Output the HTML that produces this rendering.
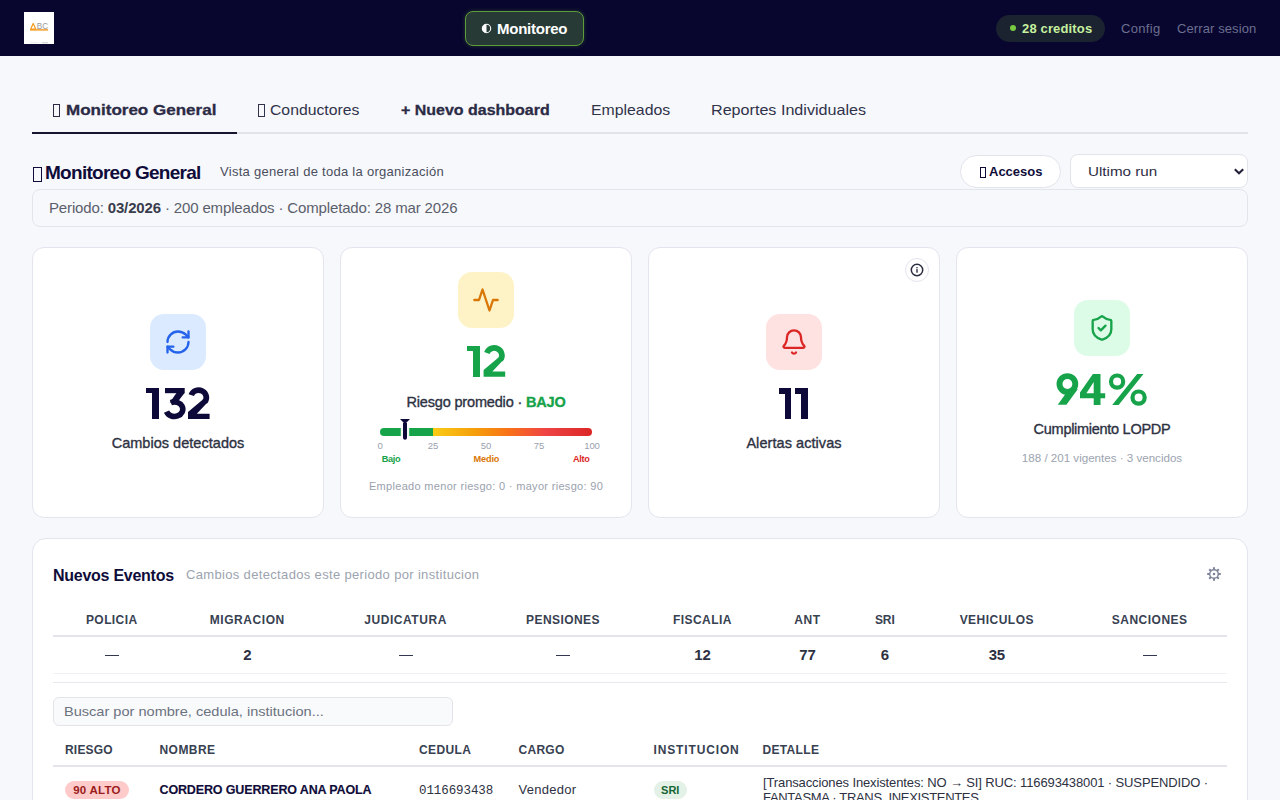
<!DOCTYPE html>
<html><head><meta charset="utf-8"><title>Monitoreo</title>
<style>
html,body{margin:0;padding:0;width:1280px;height:800px;overflow:hidden;background:#f7f8fc;font-family:"Liberation Sans",sans-serif}
.t{position:absolute;white-space:nowrap}
b{font-weight:700}
</style></head><body>
<div style="position:absolute;left:0px;top:0px;width:1280px;height:56px;box-sizing:border-box;background:#08062e"></div>
<div style="position:absolute;left:24px;top:12px;width:30px;height:32px;box-sizing:border-box;background:#fff"></div>
<svg style="position:absolute;left:24px;top:12px" width="30" height="32" viewBox="0 0 30 32"><path d="M6.6 17.2 L9.2 11.6 L11.8 17.2 Z" fill="none" stroke="#f39a1e" stroke-width="1.2" stroke-linejoin="round"/><text x="12.8" y="17.3" font-family="Liberation Sans" font-size="8.6" fill="#9a9a9a" textLength="11.3" lengthAdjust="spacingAndGlyphs">BC</text><rect x="6" y="17.2" width="18.1" height="1.4" fill="#f39a1e"/><rect x="6" y="30.3" width="8" height="0.9" fill="#e6e6e6"/><rect x="15" y="30.2" width="2" height="1" fill="#eee"/><rect x="18" y="30.1" width="6" height="1.2" fill="#d4d4d4"/></svg>
<div style="position:absolute;left:465px;top:11px;width:119px;height:35px;box-sizing:border-box;background:#283a35;border:1.5px solid #5e9b3a;border-radius:8px;box-shadow:0 0 4px rgba(94,155,58,0.35)"></div>
<svg style="position:absolute;left:481px;top:23px" width="11" height="11" viewBox="0 0 11 11"><circle cx="5.5" cy="5.5" r="4.2" fill="none" stroke="#fff" stroke-width="1.1"/><path d="M5.5 1.3 A4.2 4.2 0 0 0 5.5 9.7 Z" fill="#fff"/></svg>
<div class="t" style="left:497px;top:21.00px;font-size:15px;line-height:15.0px;font-weight:700;color:#ffffff;letter-spacing:-0.25px;font-family:'Liberation Sans', sans-serif;">Monitoreo</div>
<div style="position:absolute;left:996px;top:15px;width:109px;height:27px;box-sizing:border-box;background:#1b2230;border-radius:14px"></div>
<div style="position:absolute;left:1010px;top:25px;width:6px;height:6px;box-sizing:border-box;background:#7ac943;border-radius:50%"></div>
<div class="t" style="left:1022px;top:21.80px;font-size:13px;line-height:13.0px;font-weight:700;color:#c6f19f;letter-spacing:0.15px;font-family:'Liberation Sans', sans-serif;">28 creditos</div>
<div class="t" style="left:1121px;top:21.75px;font-size:13px;line-height:13.0px;font-weight:400;color:#6c6f90;letter-spacing:0.34px;font-family:'Liberation Sans', sans-serif;">Config</div>
<div class="t" style="left:1177px;top:21.75px;font-size:13px;line-height:13.0px;font-weight:400;color:#6c6f90;letter-spacing:0.1px;font-family:'Liberation Sans', sans-serif;">Cerrar sesion</div>
<div style="position:absolute;left:0px;top:56px;width:1280px;height:744px;box-sizing:border-box;background:#f7f8fc"></div>
<div style="position:absolute;left:32px;top:132px;width:1216px;height:2px;box-sizing:border-box;background:#e1e3ea"></div>
<div style="position:absolute;left:32px;top:132px;width:205px;height:2px;box-sizing:border-box;background:#151530"></div>
<div style="position:absolute;left:53px;top:104px;width:7px;height:12.5px;box-sizing:border-box;border:1.2px solid #2b2b45"></div>
<div class="t" style="left:65.5px;top:101.90px;font-size:15px;line-height:15.0px;font-weight:700;color:#2b2b45;letter-spacing:0px;font-family:'Liberation Sans', sans-serif;-webkit-text-stroke:0.3px #2b2b45;transform:scaleX(1.135);transform-origin:0 0;">Monitoreo General</div>
<div style="position:absolute;left:257.5px;top:104px;width:7px;height:12.5px;box-sizing:border-box;border:1px solid #30334a"></div>
<div class="t" style="left:270px;top:101.90px;font-size:15px;line-height:15.0px;font-weight:400;color:#30334a;letter-spacing:0px;font-family:'Liberation Sans', sans-serif;transform:scaleX(1.05);transform-origin:0 0;">Conductores</div>
<div class="t" style="left:401px;top:101.90px;font-size:15px;line-height:15.0px;font-weight:700;color:#2b2b45;letter-spacing:0px;font-family:'Liberation Sans', sans-serif;-webkit-text-stroke:0.3px #2b2b45;transform:scaleX(1.065);transform-origin:0 0;">+ Nuevo dashboard</div>
<div class="t" style="left:591px;top:101.90px;font-size:15px;line-height:15.0px;font-weight:400;color:#30334a;letter-spacing:0px;font-family:'Liberation Sans', sans-serif;transform:scaleX(1.055);transform-origin:0 0;">Empleados</div>
<div class="t" style="left:710.5px;top:101.90px;font-size:15px;line-height:15.0px;font-weight:400;color:#30334a;letter-spacing:0px;font-family:'Liberation Sans', sans-serif;transform:scaleX(1.075);transform-origin:0 0;">Reportes Individuales</div>
<div style="position:absolute;left:32.7px;top:167px;width:9.7px;height:14.5px;box-sizing:border-box;border:1.5px solid #0f0c3a"></div>
<div class="t" style="left:45px;top:163.12px;font-size:19px;line-height:19.0px;font-weight:700;color:#0f0c3a;letter-spacing:-0.719px;font-family:'Liberation Sans', sans-serif;">Monitoreo General</div>
<div class="t" style="left:220px;top:165.00px;font-size:13px;line-height:13.0px;font-weight:400;color:#4a4e5d;letter-spacing:0.278px;font-family:'Liberation Sans', sans-serif;">Vista general de toda la organización</div>
<div style="position:absolute;left:960px;top:155px;width:101px;height:33px;box-sizing:border-box;background:#fff;border:1px solid #e2e4ec;border-radius:17px"></div>
<div style="position:absolute;left:979.5px;top:166.5px;width:6.5px;height:11.5px;box-sizing:border-box;border:1.2px solid #0f0c3a"></div>
<div class="t" style="left:989px;top:164.80px;font-size:13px;line-height:13.0px;font-weight:700;color:#0f0c3a;letter-spacing:0.0px;font-family:'Liberation Sans', sans-serif;">Accesos</div>
<div style="position:absolute;left:1070px;top:154px;width:178px;height:34px;box-sizing:border-box;background:#fff;border:1px solid #e2e4ec;border-radius:8px"></div>
<div class="t" style="left:1088px;top:164.87px;font-size:13.5px;line-height:13.5px;font-weight:400;color:#2d2d45;letter-spacing:0px;font-family:'Liberation Sans', sans-serif;transform:scaleX(1.125);transform-origin:0 0;">Ultimo run</div>
<svg style="position:absolute;left:1233px;top:167px" width="12" height="9" viewBox="0 0 12 9"><path d="M1.8 2.2 L6 6.3 L10.2 2.2" fill="none" stroke="#22223a" stroke-width="2.1"/></svg>
<div style="position:absolute;left:32px;top:189px;width:1216px;height:38px;box-sizing:border-box;background:#f7f8fc;border:1px solid #e3e5ec;border-radius:8px"></div>
<div class="t" style="left:49px;top:199.50px;font-size:15px;line-height:15.0px;font-weight:400;color:#5b5f6b;letter-spacing:-0.148px;font-family:'Liberation Sans', sans-serif;">Periodo: <b style="color:#3a3d4c">03/2026</b> · 200 empleados · Completado: 28 mar 2026</div>
<div style="position:absolute;left:32px;top:247px;width:292px;height:271px;box-sizing:border-box;background:#fff;border:1px solid #e3e5ee;border-radius:12px"></div>
<div style="position:absolute;left:340px;top:247px;width:292px;height:271px;box-sizing:border-box;background:#fff;border:1px solid #e3e5ee;border-radius:12px"></div>
<div style="position:absolute;left:648px;top:247px;width:292px;height:271px;box-sizing:border-box;background:#fff;border:1px solid #e3e5ee;border-radius:12px"></div>
<div style="position:absolute;left:956px;top:247px;width:292px;height:271px;box-sizing:border-box;background:#fff;border:1px solid #e3e5ee;border-radius:12px"></div>
<div style="position:absolute;left:150px;top:314px;width:56px;height:56px;box-sizing:border-box;background:#dbeafe;border-radius:14px"></div>
<svg style="position:absolute;left:164px;top:328px" width="28" height="28" viewBox="0 0 24 24" fill="none" stroke-width="2" stroke-linecap="round" stroke-linejoin="round"><g stroke="#2563eb"><path d="M3 12a9 9 0 0 1 9-9 9.75 9.75 0 0 1 6.74 2.74L21 8"/><path d="M21 3v5h-5"/><path d="M21 12a9 9 0 0 1-9 9 9.75 9.75 0 0 1-6.74-2.74L3 16"/><path d="M8 16H3v5"/></g></svg>
<div style="position:absolute;left:146.4px;top:387.9px;width:6.400000000000006px;height:5.6px;box-sizing:border-box;background:#0d0a3a"></div>
<div style="position:absolute;left:152.3px;top:387.9px;width:6.699999999999989px;height:30.80000000000001px;box-sizing:border-box;background:#0d0a3a"></div>
<svg style="position:absolute;left:0;top:0;overflow:visible" width="1" height="1"><g transform="translate(0 0)" fill="#0d0a3a"><rect x="165" y="388" width="19.7" height="5.2"/><path d="M176.6 392.8 L184.7 392.8 L178.6 400.8 L169.6 402.8 Z"/><path d="M166.51 411.70 A8.4 7.3 0 1 0 170.85 402.58" fill="none" stroke="#0d0a3a" stroke-width="5.6"/></g></svg>
<svg style="position:absolute;left:0;top:0;overflow:visible" width="1" height="1"><g transform="translate(0 0)" fill="#0d0a3a"><path d="M191.28 395.14 A7.7 7.3 0 1 1 204.67 401.89" fill="none" stroke="#0d0a3a" stroke-width="5.7"/><path d="M188 418.9 L209.6 418.9 L209.6 413.7 L196.8 413.7 L208.6 401.2 L202.6 399.8 L188 412 Z"/></g></svg>
<div class="t" style="left:-222px;width:800px;text-align:center;top:435.53px;font-size:14.5px;line-height:14.5px;font-weight:400;color:#2d3142;letter-spacing:0.029px;font-family:'Liberation Sans', sans-serif;-webkit-text-stroke-width:0.35px;">Cambios detectados</div>
<div style="position:absolute;left:458px;top:272px;width:56px;height:56px;box-sizing:border-box;background:#fef3c7;border-radius:14px"></div>
<svg style="position:absolute;left:472px;top:286px" width="28" height="28" viewBox="0 0 24 24" fill="none" stroke-width="2" stroke-linecap="round" stroke-linejoin="round"><path stroke="#d97706" d="M22 12h-4l-3 9L9 3l-3 9H2"/></svg>
<div style="position:absolute;left:466.6px;top:345.8px;width:6.5px;height:5.6px;box-sizing:border-box;background:#16a34a"></div>
<div style="position:absolute;left:472.6px;top:345.8px;width:7.099999999999966px;height:31.0px;box-sizing:border-box;background:#16a34a"></div>
<svg style="position:absolute;left:0;top:0;overflow:visible" width="1" height="1"><g transform="translate(295.6 -42.1)" fill="#16a34a"><path d="M191.28 395.14 A7.7 7.3 0 1 1 204.67 401.89" fill="none" stroke="#16a34a" stroke-width="5.7"/><path d="M188 418.9 L209.6 418.9 L209.6 413.7 L196.8 413.7 L208.6 401.2 L202.6 399.8 L188 412 Z"/></g></svg>
<div class="t" style="left:86px;width:800px;text-align:center;top:394.53px;font-size:14.5px;line-height:14.5px;font-weight:400;color:#2d3142;letter-spacing:-0.168px;font-family:'Liberation Sans', sans-serif;-webkit-text-stroke-width:0.35px;">Riesgo promedio · <b style="color:#16a34a">BAJO</b></div>
<div style="position:absolute;left:380px;top:428px;width:212px;height:8px;border-radius:4px;overflow:hidden;background:linear-gradient(90deg,#16a34a 0%,#16a34a 25%,#facc15 25%,#f59e0b 45%,#f97316 60%,#ef4444 78%,#dc2626 100%)"></div>
<svg style="position:absolute;left:399px;top:418px;overflow:visible" width="12" height="24" viewBox="0 0 12 24"><path d="M1.8 6.8 H10.2 V19.8 A4.2 4.2 0 0 1 1.8 19.8 Z" fill="#fff" opacity="0.95"/><path d="M4 5 H8 V19.8 A2 2 0 0 1 4 19.8 Z" fill="#0d0a3a"/><path d="M1 1 L11 1 L6.6 5.6 H5.4 Z" fill="#0d0a3a"/></svg>
<div class="t" style="left:-20px;width:800px;text-align:center;top:441.16px;font-size:9.5px;line-height:9.5px;font-weight:400;color:#9aa1ae;letter-spacing:-0.1px;font-family:'Liberation Sans', sans-serif;">0</div>
<div class="t" style="left:33px;width:800px;text-align:center;top:441.16px;font-size:9.5px;line-height:9.5px;font-weight:400;color:#9aa1ae;letter-spacing:-0.1px;font-family:'Liberation Sans', sans-serif;">25</div>
<div class="t" style="left:86px;width:800px;text-align:center;top:441.16px;font-size:9.5px;line-height:9.5px;font-weight:400;color:#9aa1ae;letter-spacing:-0.1px;font-family:'Liberation Sans', sans-serif;">50</div>
<div class="t" style="left:139px;width:800px;text-align:center;top:441.16px;font-size:9.5px;line-height:9.5px;font-weight:400;color:#9aa1ae;letter-spacing:-0.1px;font-family:'Liberation Sans', sans-serif;">75</div>
<div class="t" style="left:192px;width:800px;text-align:center;top:441.16px;font-size:9.5px;line-height:9.5px;font-weight:400;color:#9aa1ae;letter-spacing:-0.1px;font-family:'Liberation Sans', sans-serif;">100</div>
<div class="t" style="left:381.8px;top:455.01px;font-size:9.2px;line-height:9.2px;font-weight:700;color:#16a34a;letter-spacing:-0.35px;font-family:'Liberation Sans', sans-serif;">Bajo</div>
<div class="t" style="left:86.39999999999998px;width:800px;text-align:center;top:455.01px;font-size:9.2px;line-height:9.2px;font-weight:700;color:#d97706;letter-spacing:-0.15px;font-family:'Liberation Sans', sans-serif;">Medio</div>
<div class="t" style="left:-210.5px;width:800px;text-align:right;top:455.01px;font-size:9.2px;line-height:9.2px;font-weight:700;color:#dc2626;letter-spacing:-0.35px;font-family:'Liberation Sans', sans-serif;">Alto</div>
<div class="t" style="left:86px;width:800px;text-align:center;top:481.29px;font-size:11px;line-height:11.0px;font-weight:400;color:#9aa1ae;letter-spacing:0.314px;font-family:'Liberation Sans', sans-serif;">Empleado menor riesgo: 0 · mayor riesgo: 90</div>
<div style="position:absolute;left:905px;top:258px;width:24px;height:24px;box-sizing:border-box;background:#fff;border:1px solid #e3e5ee;border-radius:50%"></div>
<svg style="position:absolute;left:910px;top:263px" width="14" height="14" viewBox="0 0 14 14"><circle cx="7" cy="7" r="5.7" fill="none" stroke="#2a2d40" stroke-width="1.5"/><rect x="6.3" y="6.1" width="1.4" height="3.6" fill="#2a2d40"/><rect x="6.3" y="4.1" width="1.4" height="1.2" fill="#2a2d40"/></svg>
<div style="position:absolute;left:766px;top:314px;width:56px;height:56px;box-sizing:border-box;background:#fee2e2;border-radius:14px"></div>
<svg style="position:absolute;left:780px;top:328px" width="28" height="28" viewBox="0 0 24 24" fill="none" stroke-width="2" stroke-linecap="round" stroke-linejoin="round"><g stroke="#dc2626"><path d="M10.268 21a2 2 0 0 0 3.464 0"/><path d="M3.262 15.326A1 1 0 0 0 4 17h16a1 1 0 0 0 .74-1.673C19.41 13.956 18 12.499 18 8A6 6 0 0 0 6 8c0 4.499-1.411 5.956-2.738 7.326"/></g></svg>
<div style="position:absolute;left:778.7px;top:388.2px;width:6.699999999999932px;height:5.6px;box-sizing:border-box;background:#0d0a3a"></div>
<div style="position:absolute;left:784.9px;top:388.2px;width:6.5px;height:30.600000000000023px;box-sizing:border-box;background:#0d0a3a"></div>
<div style="position:absolute;left:795px;top:388.2px;width:6.7000000000000455px;height:5.6px;box-sizing:border-box;background:#0d0a3a"></div>
<div style="position:absolute;left:801.2px;top:388.2px;width:6.5px;height:30.600000000000023px;box-sizing:border-box;background:#0d0a3a"></div>
<div class="t" style="left:394px;width:800px;text-align:center;top:435.53px;font-size:14.5px;line-height:14.5px;font-weight:400;color:#2d3142;letter-spacing:0.064px;font-family:'Liberation Sans', sans-serif;-webkit-text-stroke-width:0.35px;">Alertas activas</div>
<div style="position:absolute;left:1074px;top:300px;width:56px;height:56px;box-sizing:border-box;background:#dcfce7;border-radius:14px"></div>
<svg style="position:absolute;left:1088px;top:314px" width="28" height="28" viewBox="0 0 24 24" fill="none" stroke-width="2" stroke-linecap="round" stroke-linejoin="round"><g stroke="#16a34a"><path d="M20 13c0 5-3.5 7.5-7.66 8.95a1 1 0 0 1-.67-.01C7.5 20.5 4 18 4 13V6a1 1 0 0 1 1-1c2 0 4.5-1.2 6.24-2.72a1.17 1.17 0 0 1 1.52 0C14.51 3.81 17 5 19 5a1 1 0 0 1 1 1z"/><path d="m9 12 2 2 4-4"/></g></svg>
<svg style="position:absolute;left:0;top:0;overflow:visible" width="1" height="1"><circle cx="1067.4" cy="384" r="7.9" fill="none" stroke="#16a34a" stroke-width="5.9"/><path fill="#16a34a" d="M1057.8 404.8 L1066.4 404.8 L1077.9 389 L1067 391.8 Z"/></svg>
<svg style="position:absolute;left:0;top:0;overflow:visible" width="1" height="1"><path fill="#16a34a" fill-rule="evenodd" d="M1100.5 373.9 L1100.5 393.2 L1105.2 393.2 L1105.2 398.2 L1100.5 398.2 L1100.5 404.9 L1093.7 404.9 L1093.7 398.2 L1080 398.2 L1080 392.6 L1092.9 373.9 Z M1093.7 382 L1093.7 393.2 L1086.4 393.2 Z"/><circle cx="1117.1" cy="381.6" r="6.1" fill="none" stroke="#16a34a" stroke-width="4.2"/><circle cx="1138.6" cy="397.6" r="6.1" fill="none" stroke="#16a34a" stroke-width="4.2"/><path fill="#16a34a" d="M1137.1 373.9 L1143.5 373.9 L1118.6 404.9 L1112.2 404.9 Z"/></svg>
<div class="t" style="left:702px;width:800px;text-align:center;top:421.63px;font-size:14.5px;line-height:14.5px;font-weight:400;color:#2d3142;letter-spacing:-0.282px;font-family:'Liberation Sans', sans-serif;-webkit-text-stroke-width:0.35px;">Cumplimiento LOPDP</div>
<div class="t" style="left:702px;width:800px;text-align:center;top:451.98px;font-size:11.6px;line-height:11.6px;font-weight:400;color:#9ca3af;letter-spacing:-0.007px;font-family:'Liberation Sans', sans-serif;">188 / 201 vigentes · 3 vencidos</div>
<div style="position:absolute;left:32px;top:538px;width:1216px;height:300px;box-sizing:border-box;background:#fff;border:1px solid #e3e5ee;border-radius:14px"></div>
<div class="t" style="left:53px;top:567.66px;font-size:16px;line-height:16.0px;font-weight:700;color:#0f0c3a;letter-spacing:-0.262px;font-family:'Liberation Sans', sans-serif;">Nuevos Eventos</div>
<div class="t" style="left:186px;top:568.10px;font-size:13px;line-height:13.0px;font-weight:400;color:#9ca3af;letter-spacing:0.339px;font-family:'Liberation Sans', sans-serif;">Cambios detectados este periodo por institucion</div>
<svg style="position:absolute;left:1207px;top:567px" width="14" height="14" viewBox="0 0 14 14"><g fill="#80869a"><rect x="6" y="0.2" width="2" height="3" transform="rotate(0 7 7)"/><rect x="6" y="0.2" width="2" height="3" transform="rotate(45 7 7)"/><rect x="6" y="0.2" width="2" height="3" transform="rotate(90 7 7)"/><rect x="6" y="0.2" width="2" height="3" transform="rotate(135 7 7)"/><rect x="6" y="0.2" width="2" height="3" transform="rotate(180 7 7)"/><rect x="6" y="0.2" width="2" height="3" transform="rotate(225 7 7)"/><rect x="6" y="0.2" width="2" height="3" transform="rotate(270 7 7)"/><rect x="6" y="0.2" width="2" height="3" transform="rotate(315 7 7)"/></g><circle cx="7" cy="7" r="4.3" fill="#fff" stroke="#80869a" stroke-width="1.5"/><circle cx="7" cy="7" r="1.3" fill="#80869a"/></svg>
<div class="t" style="left:-288.25px;width:800px;text-align:center;top:614.09px;font-size:12px;line-height:12.0px;font-weight:700;color:#374151;letter-spacing:0.417px;font-family:'Liberation Sans', sans-serif;">POLICIA</div>
<div style="position:absolute;left:104.75px;top:654.8px;width:14px;height:1.4px;box-sizing:border-box;background:#343750"></div>
<div class="t" style="left:-152.75px;width:800px;text-align:center;top:614.09px;font-size:12px;line-height:12.0px;font-weight:700;color:#374151;letter-spacing:0.562px;font-family:'Liberation Sans', sans-serif;">MIGRACION</div>
<div class="t" style="left:-152.75px;width:800px;text-align:center;top:647.30px;font-size:15px;line-height:15.0px;font-weight:700;color:#2d3142;letter-spacing:-0.2px;font-family:'Liberation Sans', sans-serif;">2</div>
<div class="t" style="left:5.600000000000023px;width:800px;text-align:center;top:614.09px;font-size:12px;line-height:12.0px;font-weight:700;color:#374151;letter-spacing:0.556px;font-family:'Liberation Sans', sans-serif;">JUDICATURA</div>
<div style="position:absolute;left:398.6px;top:654.8px;width:14px;height:1.4px;box-sizing:border-box;background:#343750"></div>
<div class="t" style="left:163px;width:800px;text-align:center;top:614.09px;font-size:12px;line-height:12.0px;font-weight:700;color:#374151;letter-spacing:0.425px;font-family:'Liberation Sans', sans-serif;">PENSIONES</div>
<div style="position:absolute;left:556px;top:654.8px;width:14px;height:1.4px;box-sizing:border-box;background:#343750"></div>
<div class="t" style="left:302.4px;width:800px;text-align:center;top:614.09px;font-size:12px;line-height:12.0px;font-weight:700;color:#374151;letter-spacing:0.429px;font-family:'Liberation Sans', sans-serif;">FISCALIA</div>
<div class="t" style="left:302.4px;width:800px;text-align:center;top:647.30px;font-size:15px;line-height:15.0px;font-weight:700;color:#2d3142;letter-spacing:-0.2px;font-family:'Liberation Sans', sans-serif;">12</div>
<div class="t" style="left:407.5px;width:800px;text-align:center;top:614.09px;font-size:12px;line-height:12.0px;font-weight:700;color:#374151;letter-spacing:0.6px;font-family:'Liberation Sans', sans-serif;">ANT</div>
<div class="t" style="left:407.5px;width:800px;text-align:center;top:647.30px;font-size:15px;line-height:15.0px;font-weight:700;color:#2d3142;letter-spacing:-0.2px;font-family:'Liberation Sans', sans-serif;">77</div>
<div class="t" style="left:484.79999999999995px;width:800px;text-align:center;top:614.09px;font-size:12px;line-height:12.0px;font-weight:700;color:#374151;letter-spacing:-0.15px;font-family:'Liberation Sans', sans-serif;">SRI</div>
<div class="t" style="left:484.79999999999995px;width:800px;text-align:center;top:647.30px;font-size:15px;line-height:15.0px;font-weight:700;color:#2d3142;letter-spacing:-0.2px;font-family:'Liberation Sans', sans-serif;">6</div>
<div class="t" style="left:596.8px;width:800px;text-align:center;top:614.09px;font-size:12px;line-height:12.0px;font-weight:700;color:#374151;letter-spacing:0.475px;font-family:'Liberation Sans', sans-serif;">VEHICULOS</div>
<div class="t" style="left:596.8px;width:800px;text-align:center;top:647.30px;font-size:15px;line-height:15.0px;font-weight:700;color:#2d3142;letter-spacing:-0.2px;font-family:'Liberation Sans', sans-serif;">35</div>
<div class="t" style="left:749.7px;width:800px;text-align:center;top:614.09px;font-size:12px;line-height:12.0px;font-weight:700;color:#374151;letter-spacing:0.488px;font-family:'Liberation Sans', sans-serif;">SANCIONES</div>
<div style="position:absolute;left:1142.7px;top:654.8px;width:14px;height:1.4px;box-sizing:border-box;background:#343750"></div>
<div style="position:absolute;left:53px;top:635px;width:1174px;height:2px;box-sizing:border-box;background:#e3e5eb"></div>
<div style="position:absolute;left:53px;top:673px;width:1174px;height:1px;box-sizing:border-box;background:#eef0f4"></div>
<div style="position:absolute;left:53px;top:682px;width:1174px;height:1px;box-sizing:border-box;background:#e5e7ec"></div>
<div style="position:absolute;left:53px;top:697px;width:400px;height:29px;box-sizing:border-box;background:#f9fafb;border:1px solid #e2e4ea;border-radius:6px"></div>
<div class="t" style="left:63.5px;top:705.00px;font-size:13px;line-height:13.0px;font-weight:400;color:#6b7280;letter-spacing:0px;font-family:'Liberation Sans', sans-serif;transform:scaleX(1.12);transform-origin:0 0;">Buscar por nombre, cedula, institucion...</div>
<div class="t" style="left:65px;top:743.84px;font-size:12px;line-height:12.0px;font-weight:700;color:#374151;letter-spacing:0.2px;font-family:'Liberation Sans', sans-serif;">RIESGO</div>
<div class="t" style="left:159.5px;top:743.84px;font-size:12px;line-height:12.0px;font-weight:700;color:#374151;letter-spacing:0.44px;font-family:'Liberation Sans', sans-serif;">NOMBRE</div>
<div class="t" style="left:419px;top:743.84px;font-size:12px;line-height:12.0px;font-weight:700;color:#374151;letter-spacing:0.4px;font-family:'Liberation Sans', sans-serif;">CEDULA</div>
<div class="t" style="left:518.5px;top:743.84px;font-size:12px;line-height:12.0px;font-weight:700;color:#374151;letter-spacing:0.275px;font-family:'Liberation Sans', sans-serif;">CARGO</div>
<div class="t" style="left:653.5px;top:743.84px;font-size:12px;line-height:12.0px;font-weight:700;color:#374151;letter-spacing:0.86px;font-family:'Liberation Sans', sans-serif;">INSTITUCION</div>
<div class="t" style="left:762.5px;top:743.84px;font-size:12px;line-height:12.0px;font-weight:700;color:#374151;letter-spacing:0.333px;font-family:'Liberation Sans', sans-serif;">DETALLE</div>
<div style="position:absolute;left:53px;top:765px;width:1174px;height:2px;box-sizing:border-box;background:#e3e5eb"></div>
<div style="position:absolute;left:65px;top:781px;width:64px;height:17.5px;box-sizing:border-box;background:#fecaca;border-radius:9px"></div>
<div class="t" style="left:-303px;width:800px;text-align:center;top:785.07px;font-size:11.5px;line-height:11.5px;font-weight:700;color:#991b1b;letter-spacing:0.25px;font-family:'Liberation Sans', sans-serif;">90 ALTO</div>
<div class="t" style="left:159.5px;top:784.02px;font-size:12.5px;line-height:12.5px;font-weight:700;color:#0f0c3a;letter-spacing:-0.136px;font-family:'Liberation Sans', sans-serif;-webkit-text-stroke-width:0.15px;">CORDERO GUERRERO ANA PAOLA</div>
<div class="t" style="left:419px;top:784.82px;font-size:12.5px;line-height:12.5px;font-weight:400;color:#2d3142;letter-spacing:-0.089px;font-family:'Liberation Mono', monospace;">0116693438</div>
<div class="t" style="left:518.5px;top:783.00px;font-size:13px;line-height:13.0px;font-weight:400;color:#2d3142;letter-spacing:0.271px;font-family:'Liberation Sans', sans-serif;">Vendedor</div>
<div style="position:absolute;left:654px;top:781px;width:32.5px;height:17.5px;box-sizing:border-box;background:#e3f1e7;border-radius:9px"></div>
<div class="t" style="left:270.25px;width:800px;text-align:center;top:784.69px;font-size:11px;line-height:11.0px;font-weight:700;color:#166534;letter-spacing:0px;font-family:'Liberation Sans', sans-serif;">SRI</div>
<div class="t" style="left:763px;top:776.30px;font-size:13px;line-height:13.0px;font-weight:400;color:#2d3142;letter-spacing:-0.126px;font-family:'Liberation Sans', sans-serif;">[Transacciones Inexistentes: NO → SI] RUC: 116693438001 · SUSPENDIDO ·</div>
<div class="t" style="left:763px;top:790.50px;font-size:13px;line-height:13.0px;font-weight:400;color:#2d3142;letter-spacing:-0.31px;font-family:'Liberation Sans', sans-serif;">FANTASMA · TRANS. INEXISTENTES</div>
</body></html>
